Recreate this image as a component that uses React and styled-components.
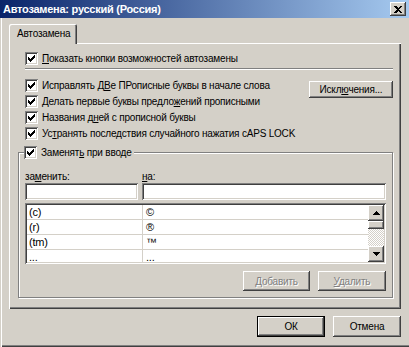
import styled, { createGlobalStyle } from 'styled-components'

const GlobalStyle = createGlobalStyle`
  html, body {
    margin: 0;
    padding: 0;
    background: #d4d0c8;
  }
  body {
    font-family: "Liberation Sans", "DejaVu Sans", sans-serif;
    font-size: 10px;
    letter-spacing: -0.2px;
    color: #000;
  }
  * { box-sizing: border-box; }
`

const raised = `
  background: #d4d0c8;
  box-shadow:
    inset -1px -1px 0 #404040,
    inset 1px 1px 0 #ffffff,
    inset -2px -2px 0 #808080;
`

const sunken = `
  background: #ffffff;
  box-shadow:
    inset 1px 1px 0 #808080,
    inset -1px -1px 0 #ffffff,
    inset 2px 2px 0 #404040,
    inset -2px -2px 0 #d4d0c8;
`

const Window = styled.div`
  width: 409px;
  height: 347px;
  display: flex;
  flex-direction: column;
  background: #d4d0c8;
  box-shadow:
    inset 1px 0 0 #d4d0c8,
    inset 2px 0 0 #ffffff,
    inset 0 -1px 0 #404040,
    inset 0 -2px 0 #808080;
`

const TitleBar = styled.div`
  height: 18px;
  flex: none;
  display: flex;
  align-items: center;
  justify-content: space-between;
  padding: 0 3px 0 3px;
  background: linear-gradient(90deg, #0a246a 0%, #a6caf0 100%);
`

const TitleText = styled.span`
  color: #fff;
  font-weight: bold;
  font-size: 11px;
  letter-spacing: -0.25px;
  white-space: nowrap;
`

const CloseButton = styled.div`
  ${raised}
  width: 16px;
  height: 14px;
  display: flex;
  align-items: center;
  justify-content: center;
`

const Body = styled.div`
  flex: 1;
  display: flex;
  flex-direction: column;
  padding: 6px 8px 0 9px;
`

const TabStrip = styled.div`
  display: flex;
  height: 19px;
  position: relative;
  z-index: 1;
`

const Tab = styled.div`
  width: 68px;
  height: 20px;
  padding: 4px 0 0 8px;
  background: #d4d0c8;
  border-radius: 2px 2px 0 0;
  box-shadow:
    inset 1px 1px 0 #ffffff,
    inset -1px 0 0 #404040,
    inset -2px 0 0 #808080;
  white-space: nowrap;
`

const Panel = styled.div`
  height: 266px;
  display: flex;
  flex-direction: column;
  padding: 9px 8px 0 9px;
  box-shadow:
    inset 1px 1px 0 #ffffff,
    inset -1px -1px 0 #404040,
    inset -2px -2px 0 #808080;
`

const TopSection = styled.div`
  padding-left: 7px;
`

const CheckRow = styled.label`
  display: flex;
  align-items: center;
  gap: 4px;
  height: 13px;
  white-space: nowrap;
  & + & {
    margin-top: 3px;
  }
`

const Box = styled.span`
  ${sunken}
  width: 13px;
  height: 13px;
  flex: none;
  display: flex;
  align-items: center;
  justify-content: center;
`

const Separator = styled.div`
  height: 2px;
  margin: 3px 0 9px;
  border-top: 1px solid #808080;
  border-bottom: 1px solid #ffffff;
`

const OptionsRow = styled.div`
  display: flex;
  justify-content: space-between;
  align-items: flex-start;
`

const CheckColumn = styled.div`
  flex: 1;
  min-width: 0;
  display: flex;
  flex-direction: column;
`

const Button = styled.button`
  ${raised}
  font: inherit;
  letter-spacing: inherit;
  color: ${(p) => (p.disabled ? '#808080' : '#000')};
  text-shadow: ${(p) => (p.disabled ? '1px 1px 0 #fff' : 'none')};
  width: ${(p) => p.w}px;
  height: ${(p) => p.h || 20}px;
  margin-top: ${(p) => p.mt || 0}px;
  border: none;
  padding: 0;
  flex: none;
  ${(p) =>
    p.primary &&
    `
    box-shadow:
      inset 0 0 0 1px #000,
      inset -2px -2px 0 #404040,
      inset 2px 2px 0 #ffffff,
      inset -3px -3px 0 #808080;
  `}
`

const GroupBox = styled.fieldset`
  margin: 6px 0 0;
  padding: 0 6px 6px 6px;
  min-width: 0;
  border: 1px solid #808080;
  box-shadow: inset 1px 1px 0 #ffffff, 1px 1px 0 #ffffff;
`

const Legend = styled.legend`
  padding: 0 2px 0 0;
  margin-left: -1px;
  background: #d4d0c8;
`

const FieldLabels = styled.div`
  display: grid;
  grid-template-columns: 113px 1fr;
  gap: 4px;
  margin-top: 11px;
  height: 13px;
  line-height: 13px;
`

const Inputs = styled.div`
  display: grid;
  grid-template-columns: 113px 1fr;
  gap: 4px;
`

const TextInput = styled.div`
  ${sunken}
  height: 17px;
`

const ListBox = styled.div`
  ${sunken}
  margin-top: 3px;
  height: 61px;
  padding: 2px;
  display: flex;
  overflow: hidden;
`

const Rows = styled.div`
  flex: 1;
  overflow: hidden;
`

const Row = styled.div`
  display: grid;
  grid-template-columns: 115px 1fr;
  height: 15px;
  line-height: 14px;
  font-size: 11px;
  border-bottom: 1px solid #d4d0c8;
`

const Cell = styled.div`
  padding-left: 2px;
  & + & {
    border-left: 1px solid #d4d0c8;
    padding-left: 3px;
  }
`

const ScrollBar = styled.div`
  width: 16px;
  display: flex;
  flex-direction: column;
`

const ScrollButton = styled.div`
  ${raised}
  width: 16px;
  height: ${(p) => p.h || 16}px;
  flex: none;
  display: flex;
  align-items: center;
  justify-content: center;
`

const Track = styled.div`
  flex: 1;
  background-color: #ffffff;
  background-image:
    linear-gradient(45deg, #d4d0c8 25%, transparent 25%, transparent 75%, #d4d0c8 75%),
    linear-gradient(45deg, #d4d0c8 25%, transparent 25%, transparent 75%, #d4d0c8 75%);
  background-size: 2px 2px;
  background-position: 0 0, 1px 1px;
`

const ActionRow = styled.div`
  display: flex;
  justify-content: flex-end;
  gap: 8px;
  margin-top: 7px;
`

const Footer = styled.div`
  display: flex;
  justify-content: flex-end;
  gap: 8px;
  padding-top: 7px;
`

const U = styled.span`
  text-decoration: underline;
`

const Check = () => (
  <svg width="7" height="7" viewBox="0 0 7 7" shapeRendering="crispEdges">
    <path d="M0 2h1v1h1v1h1v-1h1v-1h1v-1h1v-1h1v3h-1v1h-1v1h-1v1h-1v1h-1v-1h-1v-1h-1z" fill="#000" />
  </svg>
)

const CheckItem = ({ children }) => (
  <CheckRow>
    <Box>
      <Check />
    </Box>
    <span>{children}</span>
  </CheckRow>
)

const Arrow = ({ down }) => (
  <svg width="7" height="4" viewBox="0 0 7 4" shapeRendering="crispEdges">
    <path d={down ? 'M0 0h7l-3.5 4z' : 'M0 4h7l-3.5-4z'} fill="#000" />
  </svg>
)

const rows = [
  ['(c)', '©'],
  ['(r)', '®'],
  ['(tm)', '™'],
  ['...', '...'],
]

export default function App() {
  return (
    <>
      <GlobalStyle />
      <Window>
        <TitleBar>
          <TitleText>Автозамена: русский (Россия)</TitleText>
          <CloseButton>
            <svg width="8" height="7" viewBox="0 0 8 7" shapeRendering="crispEdges">
              <path d="M0 0h2l2 2 2-2h2l-3 3.5 3 3.5h-2l-2-2-2 2h-2l3-3.5z" fill="#000" />
            </svg>
          </CloseButton>
        </TitleBar>
        <Body>
          <TabStrip>
            <Tab>Автозамена</Tab>
          </TabStrip>
          <Panel>
            <TopSection>
              <CheckItem>
                <U>П</U>оказать кнопки возможностей автозамены
              </CheckItem>
              <Separator />
              <OptionsRow>
                <CheckColumn>
                  <CheckItem>
                    Исправлять Д<U>В</U>е ПРописные буквы в начале слова
                  </CheckItem>
                  <CheckItem>
                    Делать первые буквы предло<U>ж</U>ений прописными
                  </CheckItem>
                  <CheckItem>
                    Названия д<U>н</U>ей с прописной буквы
                  </CheckItem>
                  <CheckItem>
                    Ус<U>т</U>ранять последствия случайного нажатия cAPS LOCK
                  </CheckItem>
                </CheckColumn>
                <Button w={84} h={17} mt={2}>
                  Искл<U>ю</U>чения...
                </Button>
              </OptionsRow>
            </TopSection>
            <GroupBox>
              <Legend>
                <CheckItem>
                  Заменят<U>ь</U> при вводе
                </CheckItem>
              </Legend>
              <FieldLabels>
                <span>
                  за<U>м</U>енить:
                </span>
                <span>
                  <U>н</U>а:
                </span>
              </FieldLabels>
              <Inputs>
                <TextInput />
                <TextInput />
              </Inputs>
              <ListBox>
                <Rows>
                  {rows.map(([a, b]) => (
                    <Row key={a}>
                      <Cell>{a}</Cell>
                      <Cell>{b}</Cell>
                    </Row>
                  ))}
                </Rows>
                <ScrollBar>
                  <ScrollButton>
                    <Arrow />
                  </ScrollButton>
                  <ScrollButton h={8} />
                  <Track />
                  <ScrollButton>
                    <Arrow down />
                  </ScrollButton>
                </ScrollBar>
              </ListBox>
              <ActionRow>
                <Button w={67} disabled>
                  <U>Д</U>обавить
                </Button>
                <Button w={68} disabled>
                  <U>У</U>далить
                </Button>
              </ActionRow>
            </GroupBox>
          </Panel>
          <Footer>
            <Button w={68} h={21} primary>
              ОК
            </Button>
            <Button w={68} h={21}>
              Отмена
            </Button>
          </Footer>
        </Body>
      </Window>
    </>
  )
}
